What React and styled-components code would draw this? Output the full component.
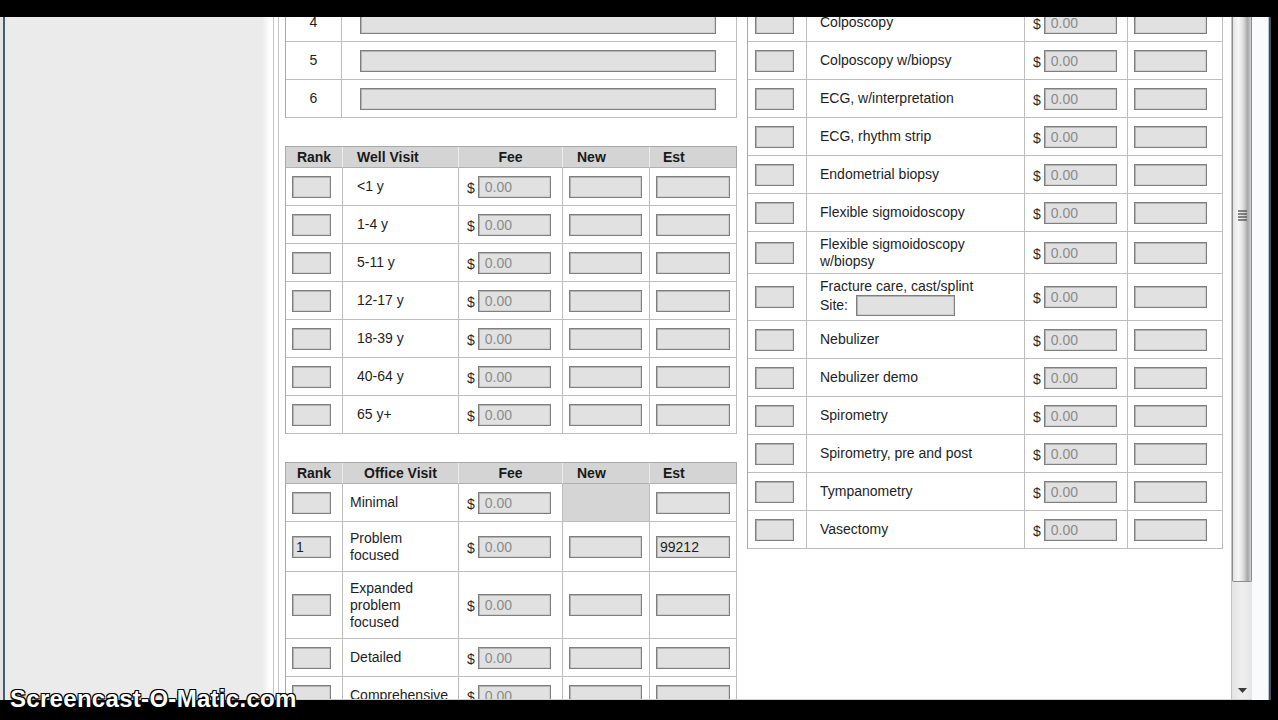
import { useLayoutEffect, useRef } from "react";
import styled, { createGlobalStyle } from "styled-components";

const GlobalStyle = createGlobalStyle`
  html, body {
    margin: 0;
    padding: 0;
    background: #000;
  }
  body {
    font-family: "Liberation Sans", Arial, sans-serif;
    color: #1e1e1e;
  }
`;

const Screen = styled.div`
  position: relative;
  width: 1278px;
  height: 720px;
  display: flex;
  flex-direction: column;
  background: #000;
  overflow: hidden;
`;

const BlackBar = styled.div`
  flex: none;
  height: ${(p) => p.$h}px;
  background: #000;
`;

const Window = styled.div`
  flex: none;
  display: flex;
  height: 683px;
`;

const LeftFrame = styled.div`
  flex: none;
  width: 10px;
  background: linear-gradient(
    to right,
    #e4e4e4 0 3px,
    #4a5a66 3px 5px,
    #e1edf4 5px 8px,
    #ebebeb 8px
  );
`;

const Sidebar = styled.div`
  flex: none;
  width: 252px;
  background: #ebebeb;
`;

const Gutter = styled.div`
  flex: none;
  width: 17px;
  background: linear-gradient(
    to right,
    #ebebeb 0,
    #ffffff 8px,
    #ffffff 11px,
    #c6c6c6 11px 12px,
    #ffffff 12px 16px,
    #c6c6c6 16px
  );
`;

const Viewport = styled.div`
  flex: none;
  width: 952px;
  height: 100%;
  box-sizing: border-box;
  overflow: hidden;
  background: #fff;
  border-bottom: 1px solid #d0d0d0;
`;

const Sheet = styled.div`
  display: flex;
  align-items: flex-start;
  gap: 10px;
  padding: 0 8px 40px 6px;
`;

const Column = styled.div`
  flex: none;
  width: ${(p) => p.$w}px;
  display: flex;
  flex-direction: column;
  gap: 28px;
`;

const Table = styled.div`
  display: grid;
  grid-template-columns: ${(p) => p.$cols};
  border-left: 1px solid #a9a9a9;
  border-top: 1px solid #a9a9a9;
  background: #fff;
`;

const HeadCell = styled.div`
  height: 21px;
  box-sizing: border-box;
  display: flex;
  align-items: center;
  justify-content: ${(p) => (p.$left ? "flex-start" : "center")};
  padding-left: ${(p) => p.$left || 0}px;
  background: #d4d4d4;
  border-right: 1px solid ${(p) => (p.$last ? "#a9a9a9" : "#ededed")};
  border-bottom: 1px solid #b0b0b0;
  font-size: 14px;
  font-weight: 700;
  color: #1a1a1a;
`;

const Cell = styled.div`
  min-height: ${(p) => p.$minH ?? 38}px;
  box-sizing: border-box;
  display: flex;
  flex-direction: ${(p) => (p.$stack ? "column" : "row")};
  align-items: ${(p) => (p.$stack ? "flex-start" : "center")};
  justify-content: ${(p) => (p.$stack ? "center" : p.$center ? "center" : "flex-start")};
  gap: ${(p) => (p.$stack ? 0 : 3)}px;
  padding: ${(p) => p.$py ?? 7.5}px ${(p) => p.$pr ?? 0}px ${(p) => p.$py ?? 7.5}px
    ${(p) => p.$pl ?? 0}px;
  background: ${(p) => (p.$fill ? "#d5d5d5" : "transparent")};
  border-right: 1px solid #bdbdbd;
  border-bottom: 1px solid #bdbdbd;
  font-size: 14px;
  line-height: 17px;
  color: #1e1e1e;
`;

const Field = styled.input`
  flex: none;
  box-sizing: border-box;
  width: ${(p) => p.$w}px;
  height: ${(p) => p.$h || 22}px;
  margin: 0;
  padding: 0 0 0 ${(p) => p.$pad ?? 3}px;
  border: 1px solid #7f7f7f;
  box-shadow: inset 1px 1px 0 #b2b2b2, inset -1px -1px 0 #cfcfcf;
  background: #e1e1e1;
  font: 14px "Liberation Sans", Arial, sans-serif;
  color: ${(p) => (p.$muted ? "#8b8b8b" : "#1e1e1e")};
  outline: none;
`;

const Dollar = styled.span`
  padding-top: 3px;
  font-size: 14px;
  color: #2a2a2a;
`;

const SiteLine = styled.div`
  display: flex;
  align-items: center;
  gap: 8px;
  height: 22px;
`;

/* scrollbar on the right of the page */
const ScrollTrack = styled.div`
  flex: none;
  width: 21px;
  height: 100%;
  box-sizing: border-box;
  display: flex;
  flex-direction: column;
  background: linear-gradient(to right, #e4e4e4, #efefef 50%, #e6e6e6);
  border-left: 1px solid #c4c4c4;
  border-bottom: 1px solid #d0d0d0;
`;

const ScrollThumb = styled.div`
  flex: none;
  height: 565px;
  box-sizing: border-box;
  display: flex;
  justify-content: center;
  padding-top: 192px;
  border: 1px solid #8c8c8c;
  border-top: none;
  border-radius: 0 0 2px 2px;
  background: linear-gradient(
    to right,
    #e2e2e2,
    #f7f7f7 30%,
    #e0e0e0 55%,
    #a6a6a6 82%,
    #d2d2d2
  );
`;

const ScrollSpace = styled.div`
  flex: 1;
`;

const ScrollArrow = styled.div`
  flex: none;
  height: 18px;
  display: flex;
  align-items: center;
  justify-content: center;
`;

const RightFrame = styled.div`
  flex: none;
  width: 26px;
  background: linear-gradient(
    to right,
    #fafbfc 0 16px,
    #b9c3cc 16px 17px,
    #3e4e5c 17px 19px,
    #000 19px
  );
`;

const Watermark = styled.div`
  position: absolute;
  left: 10px;
  top: 687px;
  font: 700 24px/24px "Liberation Sans", Arial, sans-serif;
  letter-spacing: 0.3px;
  color: #fff;
  text-shadow: -1px -1px 0 #000, 1px -1px 0 #000, -1px 1px 0 #000, 1px 1px 0 #000,
    0 2px 2px #000;
  white-space: nowrap;
`;

const wellVisits = ["<1 y", "1-4 y", "5-11 y", "12-17 y", "18-39 y", "40-64 y", "65 y+"];

const officeVisits = [
  { label: "Minimal", noNew: true },
  { label: "Problem focused", rank: "1", est: "99212" },
  { label: "Expanded problem focused" },
  { label: "Detailed" },
  { label: "Comprehensive" },
];

const procedures = [
  "Colposcopy",
  "Colposcopy w/biopsy",
  "ECG, w/interpretation",
  "ECG, rhythm strip",
  "Endometrial biopsy",
  "Flexible sigmoidoscopy",
  "Flexible sigmoidoscopy w/biopsy",
  "Fracture care, cast/splint",
  "Nebulizer",
  "Nebulizer demo",
  "Spirometry",
  "Spirometry, pre and post",
  "Tympanometry",
  "Vasectomy",
];

const VISIT_COLS = "57px 116px 104px 87px 87px";
const PROC_COLS = "59px 218px 103px 95px";
const PROC_ROW = 37.75;

function Fee({ minH }) {
  return (
    <Cell $pl={8} $minH={minH}>
      <Dollar>$</Dollar>
      <Field $w={73} $pad={6} $muted readOnly value="0.00" />
    </Cell>
  );
}

function VisitHead({ title, centered }) {
  return (
    <>
      <HeadCell>Rank</HeadCell>
      <HeadCell $left={centered ? 0 : 14}>{title}</HeadCell>
      <HeadCell>Fee</HeadCell>
      <HeadCell $left={14}>New</HeadCell>
      <HeadCell $left={13} $last>
        Est
      </HeadCell>
    </>
  );
}

function Grip() {
  return (
    <svg width="11" height="13" viewBox="0 0 11 13">
      <g stroke="#555" strokeWidth="1.4">
        <line x1="1" y1="2" x2="10" y2="2" />
        <line x1="1" y1="5" x2="10" y2="5" />
        <line x1="1" y1="8" x2="10" y2="8" />
        <line x1="1" y1="11" x2="10" y2="11" />
      </g>
    </svg>
  );
}

export default function App() {
  const viewRef = useRef(null);

  // page is opened part way down the form
  useLayoutEffect(() => {
    if (viewRef.current) viewRef.current.scrollTop = 14;
  }, []);

  return (
    <Screen>
      <GlobalStyle />
      <BlackBar $h={17} />
      <Window>
        <LeftFrame />
        <Sidebar />
        <Gutter />
        <Viewport ref={viewRef}>
          <Sheet>
            <Column $w={452}>
              <Table $cols="56px 395px">
                {[4, 5, 6].map((n) => (
                  <>
                    <Cell key={`n${n}`} $center>
                      {n}
                    </Cell>
                    <Cell key={`f${n}`} $pl={18}>
                      <Field $w={356} readOnly value="" />
                    </Cell>
                  </>
                ))}
              </Table>

              <Table $cols={VISIT_COLS}>
                <VisitHead title="Well Visit" />
                {wellVisits.map((age) => (
                  <>
                    <Cell key={`r${age}`} $pl={6}>
                      <Field $w={39} readOnly value="" />
                    </Cell>
                    <Cell key={`l${age}`} $pl={14}>
                      {age}
                    </Cell>
                    <Fee key={`f${age}`} />
                    <Cell key={`n${age}`} $pl={6}>
                      <Field $w={73} readOnly value="" />
                    </Cell>
                    <Cell key={`e${age}`} $pl={6}>
                      <Field $w={74} readOnly value="" />
                    </Cell>
                  </>
                ))}
              </Table>

              <Table $cols={VISIT_COLS}>
                <VisitHead title="Office Visit" centered />
                {officeVisits.map((v) => (
                  <>
                    <Cell key={`r${v.label}`} $pl={6}>
                      <Field $w={39} readOnly value={v.rank || ""} />
                    </Cell>
                    <Cell key={`l${v.label}`} $pl={7} $pr={6}>
                      {v.label}
                    </Cell>
                    <Fee key={`f${v.label}`} />
                    {v.noNew ? (
                      <Cell key={`n${v.label}`} $fill />
                    ) : (
                      <Cell key={`n${v.label}`} $pl={6}>
                        <Field $w={73} readOnly value="" />
                      </Cell>
                    )}
                    <Cell key={`e${v.label}`} $pl={6}>
                      <Field $w={74} readOnly value={v.est || ""} />
                    </Cell>
                  </>
                ))}
              </Table>
            </Column>

            <Column $w={476}>
              <Table $cols={PROC_COLS}>
                {procedures.map((name) => (
                  <>
                    <Cell key={`r${name}`} $pl={7} $minH={PROC_ROW}>
                      <Field $w={39} readOnly value="" />
                    </Cell>
                    {name.startsWith("Fracture") ? (
                      <Cell key={`l${name}`} $pl={13} $pr={30} $py={3.5} $stack>
                        <span>{name}</span>
                        <SiteLine>
                          Site:
                          <Field $w={99} $h={21} readOnly value="" />
                        </SiteLine>
                      </Cell>
                    ) : (
                      <Cell key={`l${name}`} $pl={13} $pr={30} $py={3.5} $minH={PROC_ROW}>
                        {name}
                      </Cell>
                    )}
                    <Fee key={`f${name}`} minH={PROC_ROW} />
                    <Cell key={`e${name}`} $pl={6} $minH={PROC_ROW}>
                      <Field $w={73} readOnly value="" />
                    </Cell>
                  </>
                ))}
              </Table>
            </Column>
          </Sheet>
        </Viewport>
        <ScrollTrack>
          <ScrollThumb>
            <Grip />
          </ScrollThumb>
          <ScrollSpace />
          <ScrollArrow>
            <svg width="9" height="5" viewBox="0 0 9 5">
              <path d="M0 0 H9 L4.5 5 Z" fill="#3a3a3a" />
            </svg>
          </ScrollArrow>
        </ScrollTrack>
        <RightFrame />
      </Window>
      <BlackBar $h={20} />
      <Watermark>Screencast-O-Matic.com</Watermark>
    </Screen>
  );
}
